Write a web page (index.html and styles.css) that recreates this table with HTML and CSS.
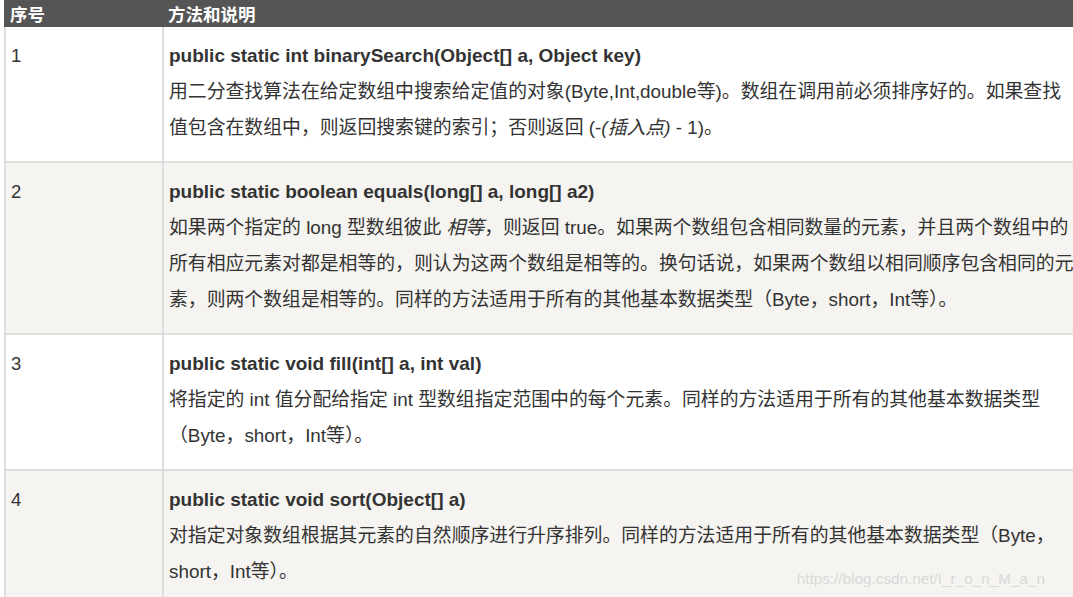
FILE: index.html
```html
<!DOCTYPE html>
<html lang="zh-CN">
<head>
<meta charset="utf-8">
<title>Arrays 方法</title>
<link rel="stylesheet" href="styles.css">
</head>
<body>
<div class="page">
  <table class="methods">
    <thead>
      <tr>
        <th class="col-num">序号</th>
        <th class="col-desc">方法和说明</th>
      </tr>
    </thead>
    <tbody>
      <tr class="row">
        <td class="num">1</td>
        <td class="desc"><b class="sig">public static int binarySearch(Object[] a, Object key)</b><br>用二分查找算法在给定数组中搜索给定值的对象(Byte,Int,double等)。数组在调用前必须排序好的。如果查找<br>值包含在数组中，则返回搜索键的索引；否则返回 (-<i>(插入点)</i> - 1)。</td>
      </tr>
      <tr class="row alt">
        <td class="num">2</td>
        <td class="desc"><b class="sig">public static boolean equals(long[] a, long[] a2)</b><br>如果两个指定的 long 型数组彼此 <i>相等</i>，则返回 true。如果两个数组包含相同数量的元素，并且两个数组中的<br>所有相应元素对都是相等的，则认为这两个数组是相等的。换句话说，如果两个数组以相同顺序包含相同的元<br>素，则两个数组是相等的。同样的方法适用于所有的其他基本数据类型（Byte，short，Int等）。</td>
      </tr>
      <tr class="row">
        <td class="num">3</td>
        <td class="desc"><b class="sig">public static void fill(int[] a, int val)</b><br>将指定的 int 值分配给指定 int 型数组指定范围中的每个元素。同样的方法适用于所有的其他基本数据类型<br>（Byte，short，Int等）。</td>
      </tr>
      <tr class="row alt">
        <td class="num">4</td>
        <td class="desc"><b class="sig">public static void sort(Object[] a)</b><br>对指定对象数组根据其元素的自然顺序进行升序排列。同样的方法适用于所有的其他基本数据类型（Byte，<br>short，Int等）。</td>
      </tr>
    </tbody>
  </table>
  <div class="watermark">https://blog.csdn.net/I_r_o_n_M_a_n</div>
</div>
</body>
</html>
```
FILE: styles.css
```css
html, body {
  margin: 0;
  padding: 0;
  overflow: hidden;
  background: #ffffff;
}

.page {
  position: relative;
  width: 1073px;
  height: 597px;
  overflow: hidden;
  padding-left: 4px;
  box-sizing: border-box;
  font-family: "Liberation Sans", "Noto Sans CJK SC", sans-serif;
  color: #333333;
}

.methods {
  border-collapse: separate;
  border-spacing: 0;
  width: 1300px;
  table-layout: fixed;
}

.methods th {
  background: #555555;
  color: #ffffff;
  font-weight: bold;
  font-size: 17.5px;
  height: 27px;
  line-height: 27px;
  padding: 0 0 0 4px;
  text-align: left;
  vertical-align: middle;
  border-left: 2px solid #555555;
  white-space: nowrap;
  font-family: "Noto Sans CJK SC", "Liberation Sans", sans-serif;
}

.methods .col-num {
  width: 152px;
}

.methods td {
  vertical-align: top;
  border-left: 2px solid #dddddd;
  border-bottom: 2px solid #dddddd;
  padding: 11px 5px 15px 5px;
  line-height: 36px;
  white-space: nowrap;
}

.row {
  background: #ffffff;
}

.row.alt {
  background: #f5f4f0;
}

.num {
  font-size: 18.5px;
}

.desc {
  font-size: 18.85px;
}

.sig {
  font-size: 19px;
  font-weight: bold;
}

.desc i {
  font-style: italic;
}

.watermark {
  position: absolute;
  right: 28px;
  bottom: 9px;
  font-size: 15.3px;
  line-height: 18px;
  color: #d9d9d9;
  font-family: "Liberation Sans", sans-serif;
}
```
